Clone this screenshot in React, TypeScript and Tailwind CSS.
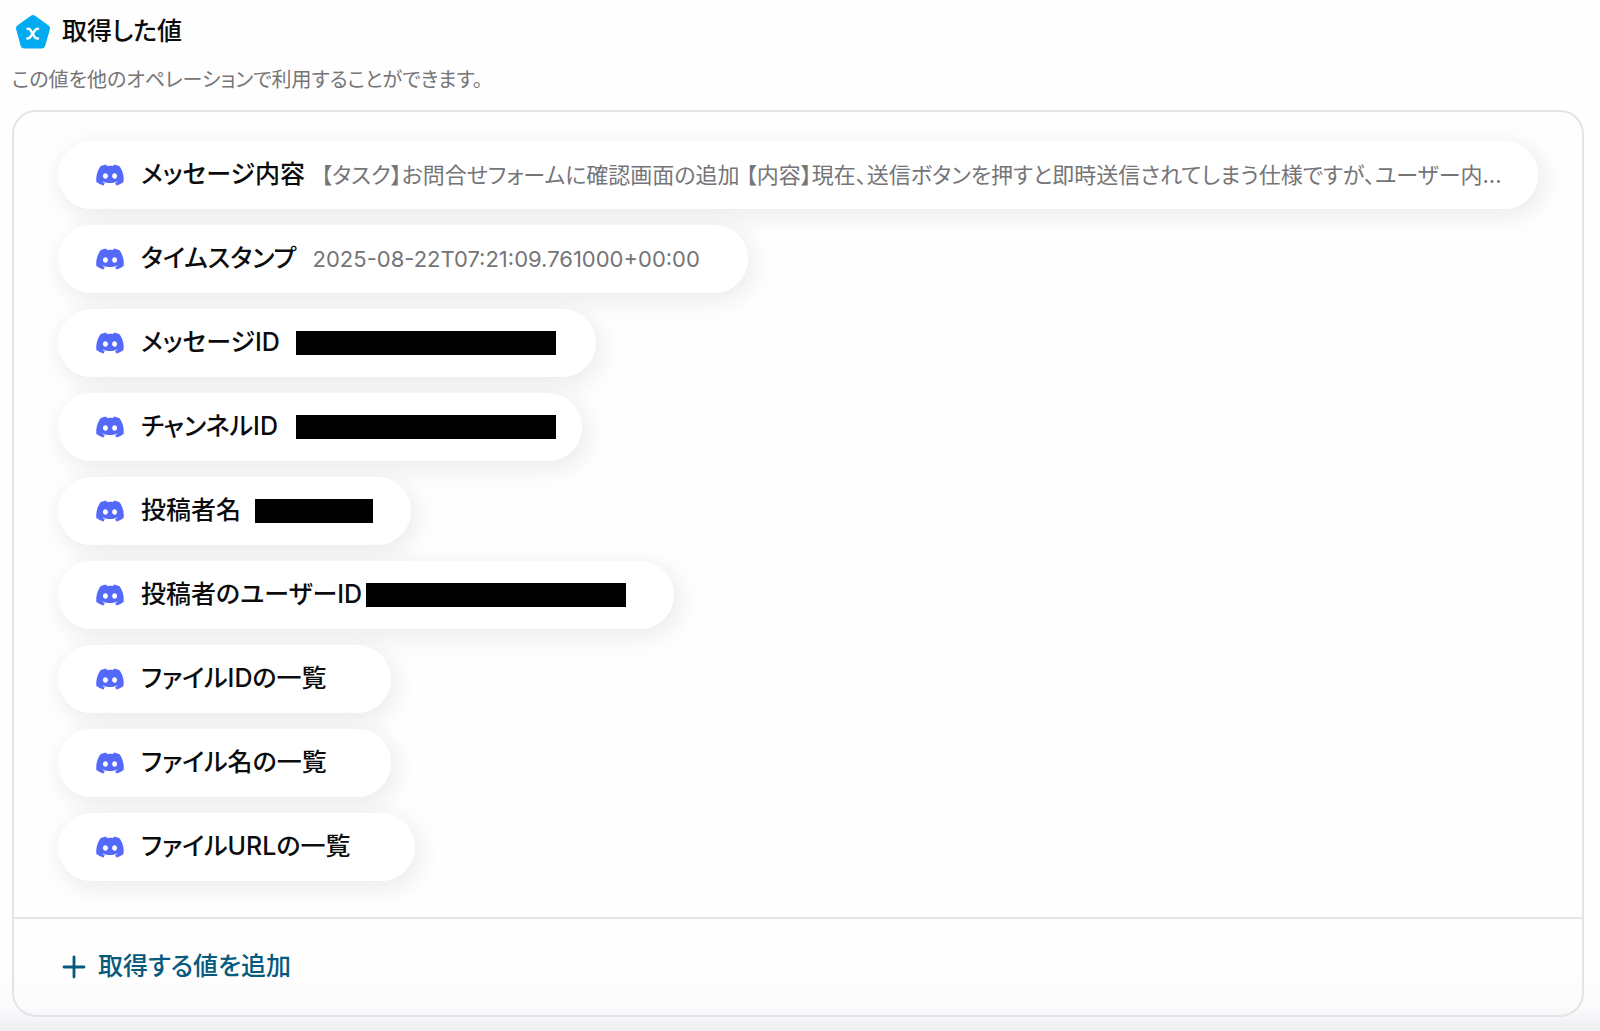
import React from "react";
import clsx from "clsx";
import { FaDiscord } from "react-icons/fa";

type OutputValue = {
  label: string;
  value?: string;
  // width of the value slot and size of the bar that hides a private value
  hidden?: { slot: string; bar: string };
  // the value fills the whole row
  wide?: boolean;
};

const outputValues: OutputValue[] = [
  {
    label: "メッセージ内容",
    value:
      "【タスク】お問合せフォームに確認画面の追加 【内容】現在、送信ボタンを押すと即時送信されてしまう仕様ですが、ユーザー内...",
    wide: true,
  },
  { label: "タイムスタンプ", value: "2025-08-22T07:21:09.761000+00:00" },
  { label: "メッセージID", hidden: { slot: "w-[252px]", bar: "w-[260px]" } },
  {
    label: "チャンネルID",
    hidden: { slot: "w-60", bar: "ml-0.5 w-[260px]" },
  },
  {
    label: "投稿者名",
    hidden: { slot: "w-[106px]", bar: "-ml-0.5 w-[118px]" },
  },
  {
    label: "投稿者のユーザーID",
    hidden: { slot: "w-[248px]", bar: "-ml-3 w-[260px]" },
  },
  { label: "ファイルIDの一覧" },
  { label: "ファイル名の一覧" },
  { label: "ファイルURLの一覧" },
];

function PentagonIcon() {
  return (
    <svg viewBox="0 0 34 34" className="size-[34px] shrink-0" aria-hidden="true">
      <path
        d="M14.9.8a3.6 3.6 0 0 1 4.2 0l13.2 9.5a3.8 3.8 0 0 1 1.5 4.2l-4.5 16a4 4 0 0 1-3.8 3H8.4a4 4 0 0 1-3.8-3L.2 14.5a3.8 3.8 0 0 1 1.5-4.2z"
        fill="#00abf2"
      />
      <g fill="none" stroke="#fff" strokeWidth="2.5" strokeLinecap="round">
        <path d="M11.6 13.8h.6c1.2 0 1.8.4 2.5 1.5l3.9 6.6c.7 1.1 1.3 1.5 2.5 1.5h.9" />
        <path d="M22 13.8h-.3c-1.2 0-1.8.4-2.6 1.5l-4.8 6.6c-.8 1.1-1.4 1.5-2.6 1.5h-.4" />
      </g>
    </svg>
  );
}

function ValuePill({ item }: { item: OutputValue }) {
  return (
    <li className="max-w-full rounded-full shadow-[4px_6px_24px_rgba(60,40,70,0.1)]">
      <div
        className={clsx(
          "relative z-10 flex h-[68px] items-center rounded-full bg-white pl-[37px]",
          item.wide ? "pr-9" : "pr-12",
        )}
      >
        <FaDiscord className="mr-4 size-[30px] shrink-0 text-[#5469fa]" />
        <span className="mr-4 shrink-0 text-[25px] font-medium text-[#0c0c0e]">
          {item.label}
        </span>
        {item.value && (
          <span className="truncate text-[22px] text-[#757578]">
            {item.value}
          </span>
        )}
        {item.hidden && (
          <span className={item.hidden.slot}>
            <span className={clsx("block h-6 bg-black", item.hidden.bar)}></span>
          </span>
        )}
      </div>
    </li>
  );
}

export default function App() {
  return (
    <main className="min-h-screen bg-[#fefefe] bg-[linear-gradient(to_top,#eeedef,#fbfafc_24px,#fefefe_56px)] pb-2 pl-3 pr-4 pt-3 font-['Inter','Noto_Sans_CJK_JP',sans-serif] [font-feature-settings:'palt']">
      <header>
        <div className="flex h-10 items-center gap-3 pl-1">
          <PentagonIcon />
          <h1 className="text-[25px] font-medium text-[#0c0c0e]">
            取得した値
          </h1>
        </div>
        <p className="mt-3.5 text-xl text-[#757578]">
          この値を他のオペレーションで利用することができます。
        </p>
      </header>

      <section className="mt-4 rounded-3xl border-2 border-[#e4e3e6]">
        <ul className="relative z-0 flex flex-col items-start gap-4 px-11 pb-9 pt-[29px]">
          {outputValues.map((item) => (
            <ValuePill key={item.label} item={item} />
          ))}
        </ul>
        <div className="border-t-2 border-[#e4e3e6] px-12 py-7">
          <button
            type="button"
            className="flex h-10 items-center gap-3 text-[25px] font-medium text-[#055a7d]"
          >
            <svg
              viewBox="0 0 24 24"
              className="size-6"
              fill="none"
              stroke="currentColor"
              strokeWidth="2.8"
              strokeLinecap="round"
              aria-hidden="true"
            >
              <path d="M12 2v20M2 12h20" />
            </svg>
            取得する値を追加
          </button>
        </div>
      </section>
    </main>
  );
}
